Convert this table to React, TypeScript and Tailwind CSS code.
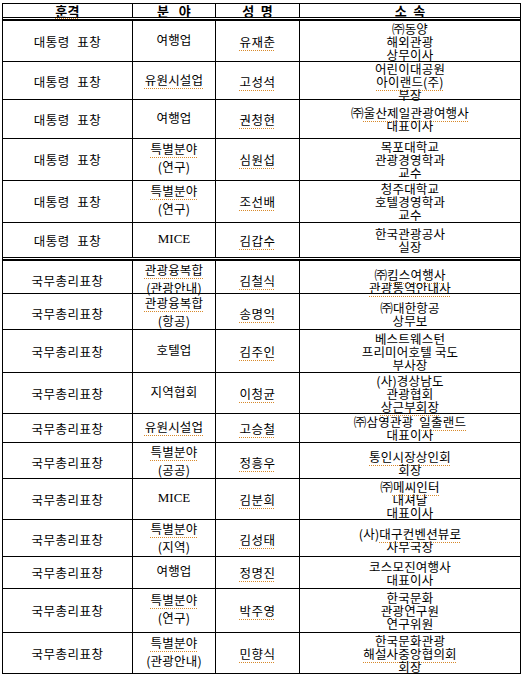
import React from "react";

type Row = { a: string; b: string[]; c: string; d: string[]; h: number; sep?: boolean };

const rows: Row[] = [
  { a: "대통령 표창", b: ["여행업"], c: "~유재춘~", d: ["㈜동양", "해외관광", "상무이사"], h: 41 },
  { a: "대통령 표창", b: ["~유원시설업~"], c: "~고성석~", d: ["어린이대공원", "~아이랜드(주)~", "부장"], h: 38 },
  { a: "대통령 표창", b: ["여행업"], c: "~권청현~", d: ["㈜~울산제일관광여행사~", "대표이사"], h: 39 },
  { a: "대통령 표창", b: ["~특별분야~", "(연구)"], c: "~심원섭~", d: ["목포대학교", "관광경영학과", "교수"], h: 42 },
  { a: "대통령 표창", b: ["~특별분야~", "(연구)"], c: "~조선배~", d: ["청주대학교", "호텔경영학과", "교수"], h: 42 },
  { a: "대통령 표창", b: ["MICE"], c: "~김갑수~", d: ["한국관광공사", "실장"], h: 35, sep: true },
  { a: "국무총리표창", b: ["~관광융복합~", "(관광안내)"], c: "~김철식~", d: ["㈜~킴스여행사~", "~관광통역안내사~"], h: 33 },
  { a: "국무총리표창", b: ["~관광융복합~", "(항공)"], c: "~송명익~", d: ["㈜대한항공", "상무보"], h: 36 },
  { a: "국무총리표창", b: ["호텔업"], c: "~김주인~", d: ["베스트웨스턴", "프리미어호텔 국도", "부사장"], h: 43 },
  { a: "국무총리표창", b: ["지역협회"], c: "~이청균~", d: ["(사)경상남도", "관광협회", "~상근부회장~"], h: 41 },
  { a: "국무총리표창", b: ["~유원시설업~"], c: "~고승철~", d: ["㈜삼영관광  ~일출랜드~", "대표이사"], h: 29 },
  { a: "국무총리표창", b: ["~특별분야~", "(공공)"], c: "~정흥우~", d: ["~통인시장상인회~", "회장"], h: 36 },
  { a: "국무총리표창", b: ["MICE"], c: "~김분희~", d: ["㈜~메씨인터~", "내셔날", "대표이사"], h: 41 },
  { a: "국무총리표창", b: ["~특별분야~", "(지역)"], c: "~김성태~", d: ["(사)~대구컨벤션뷰로~", "사무국장"], h: 37 },
  { a: "국무총리표창", b: ["여행업"], c: "~정명진~", d: ["코스모진여행사", "대표이사"], h: 32 },
  { a: "국무총리표창", b: ["~특별분야~", "(연구)"], c: "~박주영~", d: ["한국문화", "관광연구원", "연구위원"], h: 44 },
  { a: "국무총리표창", b: ["~특별분야~", "(관광안내)"], c: "~민향식~", d: ["한국문화관광", "~해설사중앙협의회~", "회장"], h: 41 },
];

function Txt({ s }: { s: string }) {
  const parts = s.split("~");
  return (
    <>
      {parts.map((p, i) =>
        i % 2 === 1 ? (
          <span
            key={i}
            className="underline decoration-dotted decoration-[#d8892a] decoration-1 underline-offset-[3px]"
          >
            {p}
          </span>
        ) : p === "MICE" ? (
          <span key={i} className="font-['Liberation_Serif',serif] text-[13px] tracking-normal">
            {p}
          </span>
        ) : (
          <span key={i}>{p}</span>
        )
      )}
    </>
  );
}

function Cell({ lines, extra, last }: { lines: string[]; extra: string; last?: boolean }) {
  return (
    <div
      className={`flex flex-col items-center justify-center text-center whitespace-pre ${extra} ${
        last ? "" : "border-r border-black"
      }`}
    >
      {lines.map((l, i) => (
        <div key={i}>
          <Txt s={l} />
        </div>
      ))}
    </div>
  );
}

export default function App() {
  return (
    <div className="w-[524px] h-[678px] bg-white overflow-hidden font-['Noto_Sans_CJK_KR','Noto_Sans',sans-serif] text-[12.5px] tracking-[0.2px] text-black">
      <div className="ml-[2px] mt-[3px] w-[519px] border-l border-t border-r border-black">
        {/* header */}
        <div className="grid grid-cols-[130px_83px_84px_1fr] h-[14px] border-b border-black font-bold text-[13px] leading-[13px]">
          <div className="flex items-center justify-center border-r border-black">
            <span className="underline decoration-dotted decoration-[#d8892a] decoration-1 underline-offset-[2px]">훈격</span>
          </div>
          <div className="flex items-center justify-center border-r border-black whitespace-pre">분   야</div>
          <div className="flex items-center justify-center border-r border-black whitespace-pre">성  명</div>
          <div className="flex items-center justify-center whitespace-pre">소  속</div>
        </div>
        <div className="h-[3px] border-b-2 border-black" />
        {rows.map((r, i) => (
          <React.Fragment key={i}>
            <div
              className="grid grid-cols-[130px_83px_84px_1fr] border-b border-black"
              style={{ height: r.h }}
            >
              <Cell lines={[r.a]} extra="leading-[13px] [word-spacing:4px] tracking-[0.5px]" />
              <Cell lines={r.b} extra="leading-[18px] pb-[3px]" />
              <Cell lines={[r.c]} extra="leading-[13px] tracking-[0.5px]" />
              <Cell lines={r.d} extra="leading-[13px]" last />
            </div>
            {r.sep && <div className="h-[3px] border-b-2 border-black" />}
          </React.Fragment>
        ))}
      </div>
    </div>
  );
}
